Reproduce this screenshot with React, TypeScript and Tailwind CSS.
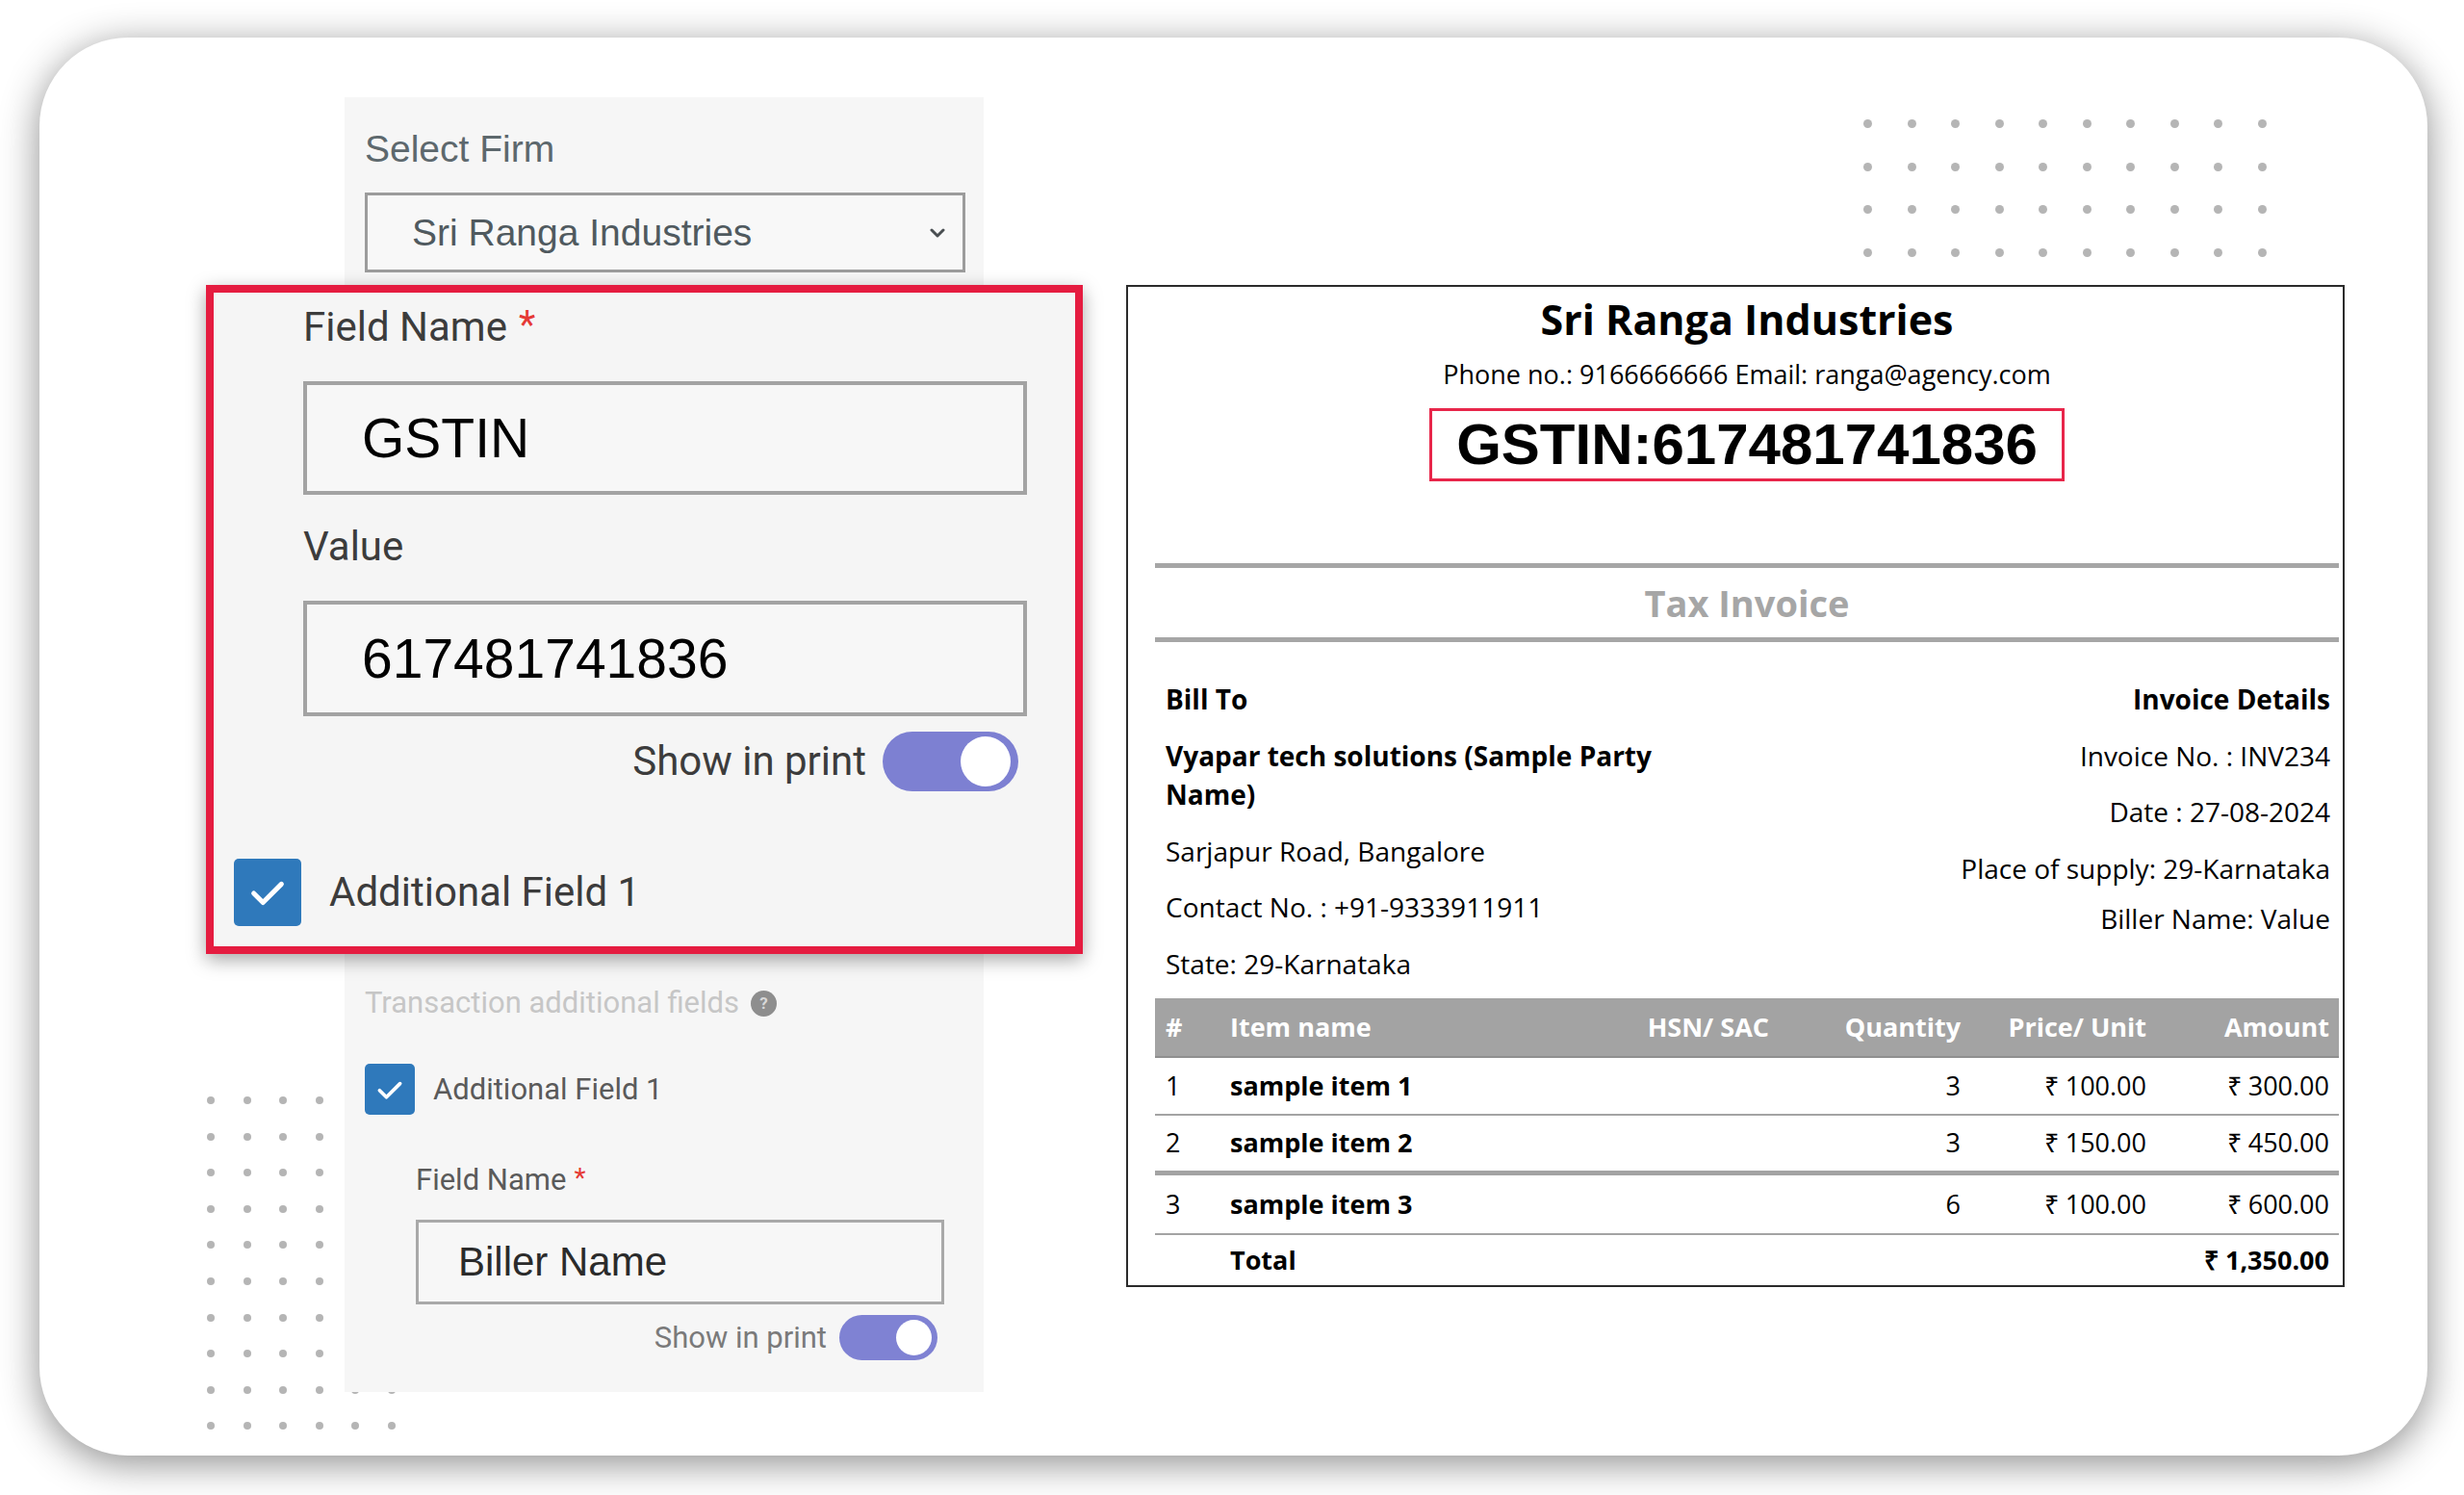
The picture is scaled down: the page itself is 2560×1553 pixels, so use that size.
import React from "react";

const rows = [
  { n: "1", name: "sample item 1", qty: "3", price: "₹ 100.00", amount: "₹ 300.00", cls: "h-[60px] border-b-2" },
  { n: "2", name: "sample item 2", qty: "3", price: "₹ 150.00", amount: "₹ 450.00", cls: "h-[62px] border-b-[5px]" },
  { n: "3", name: "sample item 3", qty: "6", price: "₹ 100.00", amount: "₹ 600.00", cls: "h-[62px] border-b-2" },
];

const cols = "grid grid-cols-[78px_402px_158px_199px_193px_199px] items-center";

function Toggle({ big }: { big?: boolean }) {
  return big ? (
    <div className="flex h-[62px] w-[141px] items-center justify-end rounded-full bg-[#7d80d2] pr-[8px]">
      <div className="h-[52px] w-[52px] rounded-full bg-white" />
    </div>
  ) : (
    <div className="flex h-[47px] w-[102px] items-center justify-end rounded-full bg-[#7f82d3] pr-[6px]">
      <div className="h-[37px] w-[37px] rounded-full bg-white" />
    </div>
  );
}

function Check({ size }: { size: number }) {
  return (
    <div
      className={`flex shrink-0 items-center justify-center rounded-[5px] bg-[#2f79bb] ${size === 70 ? "h-[70px] w-[70px]" : "h-[53px] w-[52px]"}`}
    >
      <svg viewBox="0 0 24 24" className={size === 70 ? "h-[46px] w-[46px]" : "h-[34px] w-[34px]"} fill="none">
        <path d="M4.5 12.5l5 5 10-10" stroke="white" strokeWidth="2.6" strokeLinecap="round" strokeLinejoin="round" />
      </svg>
    </div>
  );
}

function Dots({ cols: c, rows: r, cls }: { cols: number; rows: number; cls: string }) {
  return (
    <div className={cls}>
      {Array.from({ length: c * r }).map((_, i) => (
        <div key={i} className="rounded-full bg-[#b5b5b5]" />
      ))}
    </div>
  );
}

export default function App() {
  return (
    <div className="h-[1553px] w-[2560px] overflow-hidden bg-white pl-[41px] pt-[39px]">
      <div className="relative h-[1473px] w-[2481px] rounded-[92px] bg-white shadow-[0_8px_40px_rgba(0,0,0,0.45)]">
        {/* decorative dots */}
        <Dots
          cols={6}
          rows={10}
          cls="absolute left-[174px] top-[1100px] grid grid-cols-[repeat(6,8px)] grid-rows-[repeat(10,8px)] gap-[29.6px]"
        />
        <Dots
          cols={10}
          rows={4}
          cls="absolute left-[1895px] top-[85px] grid grid-cols-[repeat(10,9px)] grid-rows-[repeat(4,9px)] gap-x-[36.5px] gap-y-[35.7px]"
        />

        <div className="relative flex items-start">
          {/* settings panel */}
          <div className="ml-[317px] mt-[62px] flex h-[1345px] w-[664px] flex-col bg-[#f6f6f6] pl-[21px] font-['Liberation_Sans',sans-serif]">
            <div className="mt-[34px] text-[39px] leading-[40px] text-[#5d686d]">Select Firm</div>
            <div className="mt-[25px] flex h-[83px] w-[624px] items-center justify-between border-[3px] border-[#9c9c9c] bg-[#f8f8f8] pl-[46px] pr-[18px]">
              <span className="text-[39px] leading-[40px] text-[#505a5f]">Sri Ranga Industries</span>
              <svg viewBox="0 0 16 10" className="h-[10px] w-[16px]" fill="none">
                <path d="M2 2l6 6 6-6" stroke="#4a4f52" strokeWidth="3" strokeLinecap="round" strokeLinejoin="round" />
              </svg>
            </div>

            <div className="mt-[743px] flex items-center font-['Roboto',sans-serif] text-[31px] leading-[32px] text-[#c6c6c6]">
              <span>Transaction additional fields</span>
              <span className="ml-[12px] flex h-[27px] w-[27px] items-center justify-center rounded-full bg-[#8e8e8e] text-[17px] font-bold leading-none text-[#d8d8d8]">
                ?
              </span>
            </div>

            <div className="mt-[47px] flex items-center">
              <Check size={52} />
              <span className="ml-[19px] font-['Roboto',sans-serif] text-[31px] leading-[32px] text-[#5a5a5a]">Additional Field 1</span>
            </div>

            <div className="ml-[53px] mt-[52px] flex flex-col">
              <div className="font-['Roboto',sans-serif] text-[31px] leading-[32px] text-[#5a5a5a]">
                Field Name<span className="ml-[8px] align-top text-[28px] leading-none text-[#e53935]">*</span>
              </div>
              <div className="mt-[25px] flex h-[88px] w-[549px] items-center border-[3px] border-[#a9a9a9] bg-[#f7f7f7] pl-[41px] text-[42px] leading-[44px] text-[#2b2b2b]">
                Biller Name
              </div>
              <div className="mt-[11px] flex w-[542px] items-center justify-end">
                <span className="mr-[13px] font-['Roboto',sans-serif] text-[31px] leading-[32px] text-[#7a7a7a]">Show in print</span>
                <Toggle />
              </div>
            </div>
          </div>

          {/* invoice preview */}
          <div className="ml-[148px] mt-[257px] flex h-[1041px] w-[1266px] flex-col border-2 border-[#2b2b2b] bg-white pl-[28px] pr-[4px] font-['Open_Sans',sans-serif] text-[28px] text-black">
            <div className="mt-[9px] text-center text-[43px] font-bold leading-[50px]">Sri Ranga Industries</div>
            <div className="mt-[14px] text-center text-[27px] leading-[36px]">Phone no.: 9166666666 Email: ranga@agency.com</div>
            <div className="mt-[17px] flex justify-center">
              <div className="flex h-[76px] w-[660px] items-center justify-center border-[3px] border-[#e8264a] font-['Liberation_Sans',sans-serif] text-[60px] font-bold leading-[70px]">
                GSTIN:617481741836
              </div>
            </div>
            <div className="mt-[85px] h-[5px] bg-[#a6a6a6]" />
            <div className="flex h-[72px] items-center justify-center text-[38px] font-bold text-[#a6a6a6]">Tax Invoice</div>
            <div className="h-[5px] bg-[#a6a6a6]" />

            <div className="mt-[39px] flex justify-between pl-[11px] pr-[9px] leading-[40px]">
              <div className="flex w-[580px] flex-col">
                <div className="font-bold">Bill To</div>
                <div className="mt-[19px] font-bold">Vyapar tech solutions (Sample Party Name)</div>
                <div className="mt-[19px]">Sarjapur Road, Bangalore</div>
                <div className="mt-[18px]">Contact No. : +91-9333911911</div>
                <div className="mt-[19px]">State: 29-Karnataka</div>
              </div>
              <div className="flex flex-col items-end">
                <div className="font-bold">Invoice Details</div>
                <div className="mt-[19px]">Invoice No. : INV234</div>
                <div className="mt-[18px]">Date : 27-08-2024</div>
                <div className="mt-[19px]">Place of supply: 29-Karnataka</div>
                <div className="mt-[12px]">Biller Name: Value</div>
              </div>
            </div>

            <div className="mt-[16px] flex flex-col text-[27px]">
              <div className={`${cols} h-[62px] border-b-2 border-[#8f8f8f] bg-[#a3a3a3] font-bold text-white`}>
                <span className="pl-[11px]">#</span>
                <span>Item name</span>
                <span className="text-right">HSN/ SAC</span>
                <span className="text-right">Quantity</span>
                <span className="text-right">Price/ Unit</span>
                <span className="pr-[9px] text-right">Amount</span>
              </div>
              {rows.map((r) => (
                <div key={r.n} className={`${cols} ${r.cls} border-[#a3a3a3]`}>
                  <span className="pl-[11px]">{r.n}</span>
                  <span className="font-bold">{r.name}</span>
                  <span />
                  <span className="text-right">{r.qty}</span>
                  <span className="text-right">{r.price}</span>
                  <span className="pr-[9px] text-right">{r.amount}</span>
                </div>
              ))}
              <div className={`${cols} h-[52px] font-bold`}>
                <span />
                <span>Total</span>
                <span />
                <span />
                <span />
                <span className="pr-[9px] text-right">₹ 1,350.00</span>
              </div>
            </div>
          </div>
        </div>

        {/* zoomed callout of the additional field */}
        <div className="absolute left-[173px] top-[257px] flex h-[695px] w-[911px] flex-col border-[8px] border-[#e51c40] bg-[#f5f5f5] pl-[21px] font-['Roboto',sans-serif] text-[42px] text-[#3c3c3c] shadow-[0_6px_18px_rgba(0,0,0,0.35)]">
          <div className="flex flex-col pl-[72px]">
            <div className="mt-[14px] leading-[44px]">
              Field Name<span className="ml-[12px] align-top text-[40px] leading-none text-[#e53935]">*</span>
            </div>
            <div className="mt-[34px] flex h-[118px] w-[752px] items-center border-[4px] border-[#a3a3a3] bg-[#f7f7f7] pl-[57px] font-['Liberation_Sans',sans-serif] text-[57px] leading-[60px] text-black">
              GSTIN
            </div>
            <div className="mt-[32px] leading-[44px]">Value</div>
            <div className="mt-[34px] flex h-[120px] w-[752px] items-center border-[4px] border-[#a3a3a3] bg-[#f7f7f7] pl-[57px] font-['Liberation_Sans',sans-serif] text-[57px] leading-[60px] text-black">
              617481741836
            </div>
            <div className="mt-[16px] flex w-[743px] items-center justify-end">
              <span className="mr-[17px] leading-[44px]">Show in print</span>
              <Toggle big />
            </div>
          </div>
          <div className="mt-[70px] flex items-center">
            <Check size={70} />
            <span className="ml-[29px] leading-[44px]">Additional Field 1</span>
          </div>
        </div>
      </div>
    </div>
  );
}
